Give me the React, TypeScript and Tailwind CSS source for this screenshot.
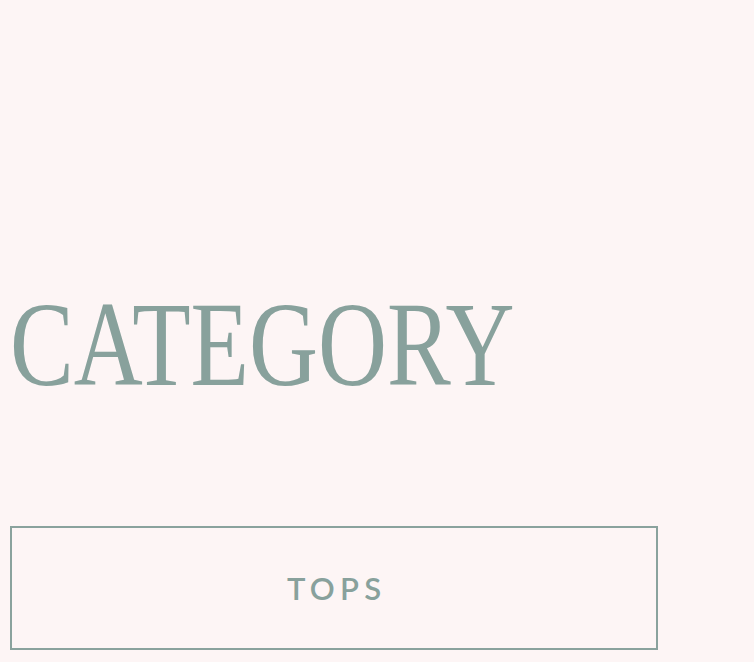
export default function App() {
  return (
    <div className="min-h-[662px] w-full bg-[#fdf5f5] px-[10px] pt-[284px]">
      <h1
        className="origin-left scale-x-[0.79] whitespace-nowrap text-[121px] leading-none font-normal text-[#88a19c]"
        style={{ fontFamily: '"Liberation Serif", "DejaVu Serif", serif' }}
      >
        CATEGORY
      </h1>
      <div className="mt-[121px] flex h-[124px] w-[648px] items-center justify-center border-2 border-[#8aa29d]">
        <span
          className="pl-[0.17em] text-[31px] font-semibold tracking-[0.17em] text-[#88a19c]"
          style={{ fontFamily: 'Lato, "Open Sans", sans-serif' }}
        >
          TOPS
        </span>
      </div>
    </div>
  );
}
